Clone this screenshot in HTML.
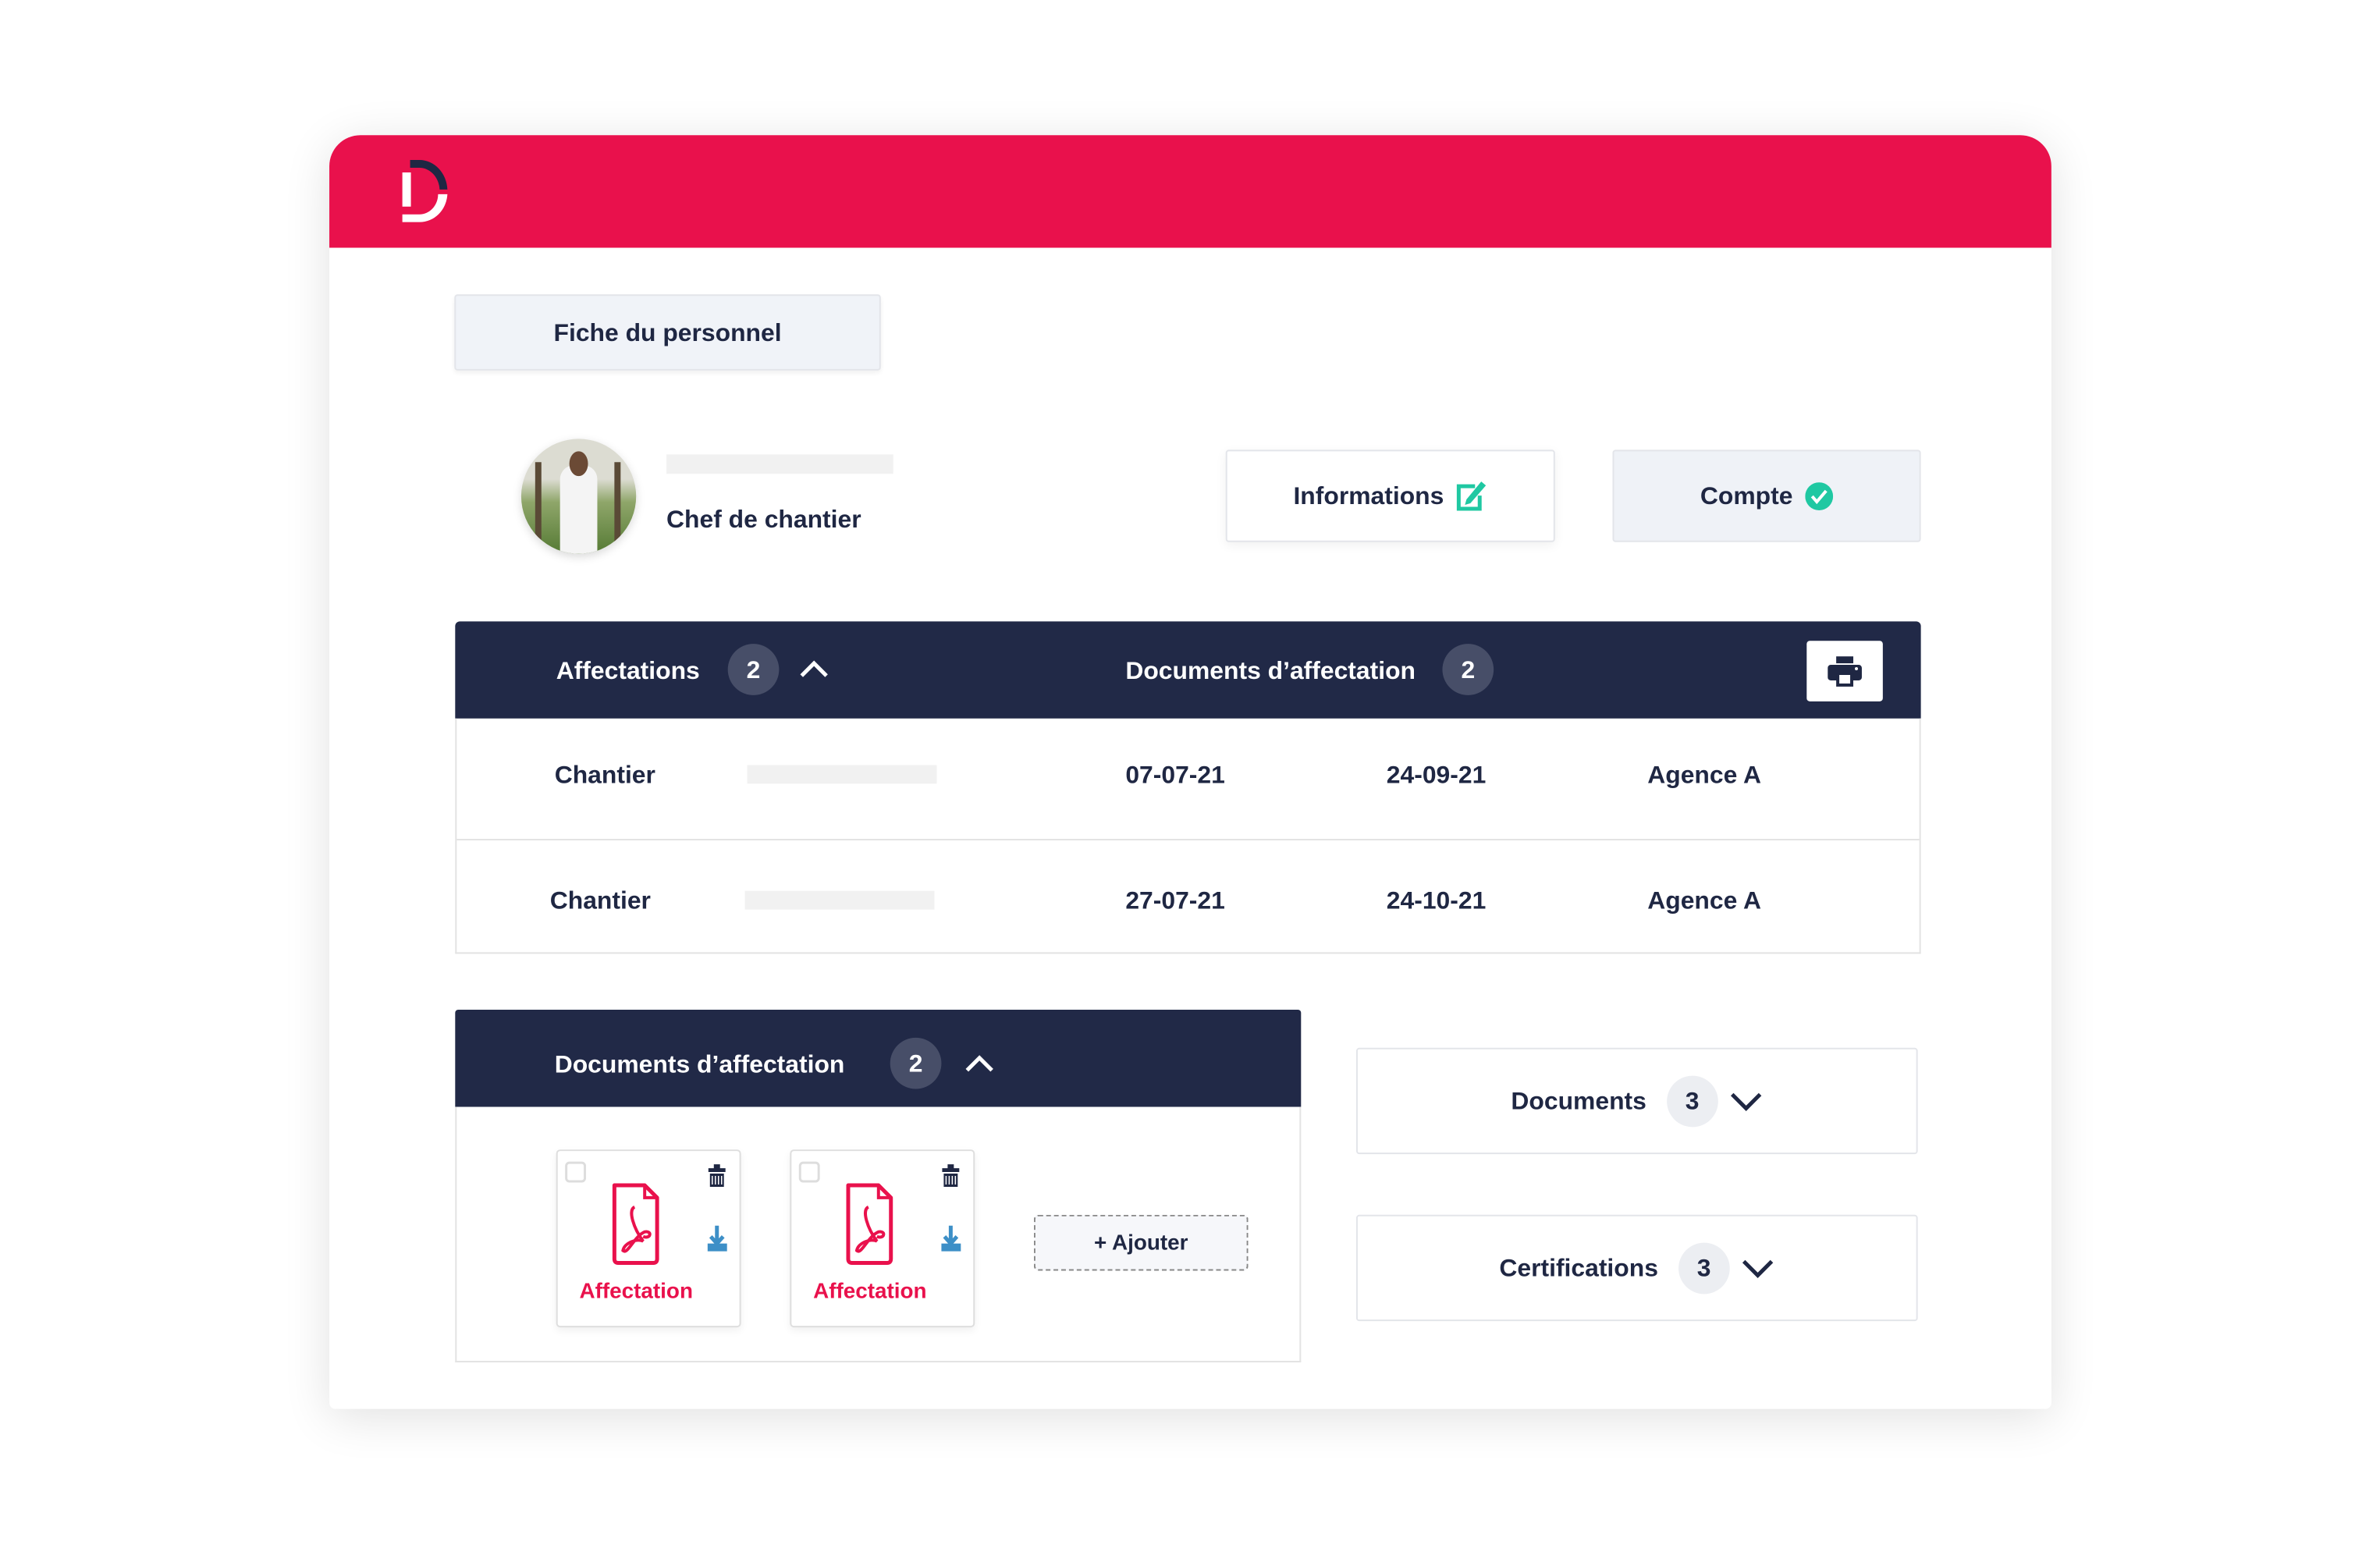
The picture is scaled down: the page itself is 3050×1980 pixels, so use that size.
<!DOCTYPE html>
<html><head><meta charset="utf-8"><style>
*{box-sizing:border-box;margin:0;padding:0}
body{width:3050px;height:1980px;background:#fff;position:relative;overflow:hidden;font-family:"Liberation Sans",sans-serif;font-weight:bold;color:#1f2743}
#w{position:absolute;left:0;top:0;width:3050px;height:1980px;transform:scale(0.9954);transform-origin:0 0}
.a{position:absolute}
.card{left:424px;top:174px;width:2217px;height:1640px;background:#fff;border-radius:40px 40px 8px 8px;box-shadow:0 10px 60px rgba(0,0,0,.12)}
.hdr{left:424px;top:174px;width:2217px;height:145px;background:#e9114c;border-radius:40px 40px 0 0}
.t{font-size:32px;white-space:nowrap}
.bar{background:#f1f1f1}
.navy{background:#212947}
.badge{width:66px;height:66px;border-radius:50%;background:#474e68;color:#fff;font-size:32px;display:flex;align-items:center;justify-content:center}
.bx{border:2px solid #e3e5ea;border-radius:4px;display:flex;align-items:center;justify-content:center}
.dc{border:2px solid #dedede;border-radius:5px;background:#fff;box-shadow:0 4px 10px rgba(0,0,0,.06)}
</style></head><body><div id="w">
<div class="a card"></div>
<div class="a hdr"></div>
<svg class="a" style="left:510px;top:200px" width="76" height="90" viewBox="0 0 76 90"><path d="M18 6 H30 A36 40 0 0 1 66 44 H56 A26 30 0 0 0 30 16 H18Z" fill="#1f2743"/><rect x="8" y="22" width="11" height="44" fill="#fff"/><path d="M8 86 V76 H30 A24 26 0 0 0 54 50 H66 A36 38 0 0 1 30 86Z" fill="#fff"/></svg>

<div class="a bx" style="left:585px;top:379px;width:549px;height:98px;background:#f0f3f8;box-shadow:0 3px 6px rgba(0,0,0,.06)"><span class="t">Fiche du personnel</span></div>

<div class="a" style="left:671px;top:565px;width:148px;height:148px;border-radius:50%;overflow:hidden;background:linear-gradient(#dcdcd2 0 35%,#8fa66a 55%,#557a34);box-shadow:0 4px 12px rgba(0,0,0,.15)">
<div class="a" style="left:50px;top:34px;width:48px;height:114px;background:#f4f4f4;border-radius:18px 18px 0 0"></div>
<div class="a" style="left:62px;top:16px;width:24px;height:32px;border-radius:50%;background:#6b4a35"></div>
<div class="a" style="left:18px;top:30px;width:8px;height:110px;background:#5a4a36"></div>
<div class="a" style="left:120px;top:30px;width:8px;height:110px;background:#5a4a36"></div></div>
<div class="a bar" style="left:858px;top:585px;width:292px;height:25px"></div>
<div class="a t" style="left:858px;top:650px">Chef de chantier</div>

<div class="a bx" style="left:1578px;top:579px;width:424px;height:119px;background:#fff;box-shadow:0 4px 14px rgba(0,0,0,.06)"><span class="t">Informations</span>
<svg style="margin-left:14px" width="42" height="42" viewBox="0 0 42 42"><path d="M26 8 H5 V37 H32 V20" fill="none" stroke="#1fc8a2" stroke-width="5"/><path d="M34 2 L40 7 L20 30 L13 32 L15 25Z" fill="#1fc8a2"/></svg></div>
<div class="a bx" style="left:2076px;top:579px;width:397px;height:119px;background:#eff2f7"><span class="t">Compte</span>
<svg style="margin-left:16px" width="36" height="36" viewBox="0 0 36 36"><circle cx="18" cy="18" r="18" fill="#1fc8a2"/><path d="M9 18 L15 25 L27 11" fill="none" stroke="#fff" stroke-width="4"/></svg></div>

<div class="a navy" style="left:586px;top:800px;width:1887px;height:125px;border-radius:6px 6px 0 0"></div>
<div class="a t" style="left:716px;top:845px;color:#fff">Affectations</div>
<div class="a badge" style="left:937px;top:829px">2</div>
<svg class="a" style="left:1028px;top:848px" width="40" height="26"><path d="M4 22 L20 6 L36 22" fill="none" stroke="#fff" stroke-width="5"/></svg>
<div class="a t" style="left:1449px;top:845px;color:#fff">Documents d’affectation</div>
<div class="a badge" style="left:1857px;top:829px">2</div>
<div class="a" style="left:2326px;top:825px;width:98px;height:78px;background:#fff;border-radius:4px"></div>
<svg class="a" style="left:2353px;top:845px" width="44" height="40" viewBox="0 0 44 40"><rect x="11" y="0" width="22" height="9" fill="#1f2743"/><rect x="0" y="11" width="44" height="20" rx="4" fill="#1f2743"/><rect x="11" y="22" width="22" height="17" fill="#1f2743"/><rect x="15" y="24" width="14" height="11" fill="#fff"/><circle cx="37" cy="16" r="2" fill="#fff"/></svg>

<div class="a" style="left:586px;top:925px;width:1887px;height:303px;border:2px solid #e3e3e3;border-top:none"></div>
<div class="a" style="left:588px;top:1080px;width:1883px;height:2px;background:#e3e3e3"></div>
<div class="a t" style="left:714px;top:979px">Chantier</div>
<div class="a bar" style="left:962px;top:985px;width:244px;height:24px"></div>
<div class="a t" style="left:1449px;top:979px">07-07-21</div>
<div class="a t" style="left:1785px;top:979px">24-09-21</div>
<div class="a t" style="left:2121px;top:979px">Agence A</div>
<div class="a t" style="left:708px;top:1141px">Chantier</div>
<div class="a bar" style="left:959px;top:1147px;width:244px;height:24px"></div>
<div class="a t" style="left:1449px;top:1141px">27-07-21</div>
<div class="a t" style="left:1785px;top:1141px">24-10-21</div>
<div class="a t" style="left:2121px;top:1141px">Agence A</div>

<div class="a navy" style="left:586px;top:1300px;width:1089px;height:125px;border-radius:4px 4px 0 0"></div>
<div class="a t" style="left:714px;top:1352px;color:#fff">Documents d’affectation</div>
<div class="a badge" style="left:1146px;top:1336px">2</div>
<svg class="a" style="left:1241px;top:1356px" width="40" height="26"><path d="M4 22 L20 6 L36 22" fill="none" stroke="#fff" stroke-width="5"/></svg>
<div class="a" style="left:586px;top:1425px;width:1089px;height:329px;border:2px solid #e3e3e3;border-top:none"></div>

<div class="a dc" style="left:716px;top:1480px;width:238px;height:229px"></div>
<div class="a dc" style="left:1017px;top:1480px;width:238px;height:229px"></div>
<svg class="a" style="left:716px;top:1480px" width="540" height="230">
<g id="d"><rect x="13" y="17" width="24" height="24" rx="4" fill="none" stroke="#ddd" stroke-width="3"/>
<path d="M196 24h22v5h-22z M203 19h8v5h-8z M198 31h18v17h-18z" fill="#1f2743"/>
<path d="M201 34v11 M205 34v11 M209 34v11 M213 34v11" stroke="#fff" stroke-width="1.5"/>
<path d="M207 98v22 M199 112l8 9 8-9" stroke="#3d8fc7" stroke-width="5" fill="none"/><rect x="195" y="121" width="25" height="10" fill="#3d8fc7"/>
<path d="M75 46 H114 L130 62 V141 Q130 146 125 146 H80 Q75 146 75 141Z" fill="none" stroke="#e9114c" stroke-width="5" stroke-linejoin="round"/>
<path d="M114 46 V62 H130" fill="none" stroke="#e9114c" stroke-width="4"/>
<path d="M101 74 C92 78 100 102 112 118 C104 114 88 120 86 130 C92 136 100 112 114 106 C124 104 122 116 112 112" fill="none" stroke="#e9114c" stroke-width="4"/>
<text x="103" y="191" font-family="Liberation Sans" font-weight="bold" font-size="28" fill="#e9114c" text-anchor="middle">Affectation</text></g>
<use href="#d" x="301"/></svg>

<div class="a" style="left:1331px;top:1564px;width:276px;height:72px;border:2px dashed #888;border-radius:6px;background:#f6f7fa;display:flex;align-items:center;justify-content:center"><span style="font-size:28px">+ Ajouter</span></div>

<div class="a bx" style="left:1746px;top:1349px;width:723px;height:137px;background:#fff"><span class="t">Documents</span><div class="badge" style="margin-left:26px;background:#eceef2;color:#1f2743">3</div><svg style="margin-left:14px" width="44" height="26"><path d="M4 4 L22 22 L40 4" fill="none" stroke="#1f2743" stroke-width="5"/></svg></div>
<div class="a bx" style="left:1746px;top:1564px;width:723px;height:137px;background:#fff"><span class="t">Certifications</span><div class="badge" style="margin-left:26px;background:#eceef2;color:#1f2743">3</div><svg style="margin-left:14px" width="44" height="26"><path d="M4 4 L22 22 L40 4" fill="none" stroke="#1f2743" stroke-width="5"/></svg></div>
</div></body></html>
